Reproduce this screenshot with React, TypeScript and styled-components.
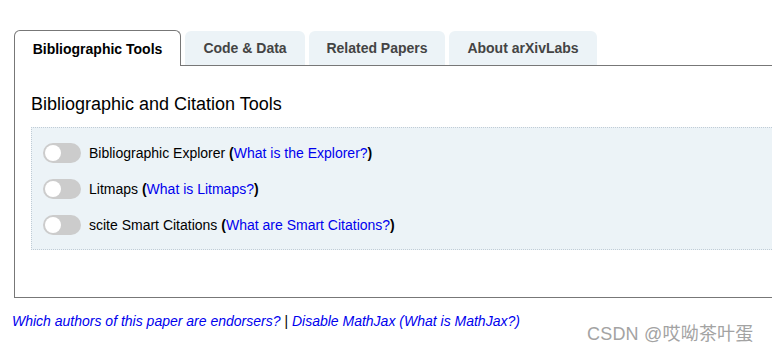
import React from 'react'
import styled, { createGlobalStyle } from 'styled-components'

const GlobalStyle = createGlobalStyle`
  html, body {
    margin: 0;
    padding: 0;
    background: #fff;
    overflow: hidden;
  }
  body {
    font-family: 'Liberation Sans', Arial, sans-serif;
    color: #000;
  }
`

const Page = styled.div`
  position: relative;
  width: 772px;
  height: 351px;
  padding: 30px 0 0 14px;
  box-sizing: border-box;
  overflow: hidden;
`

const TabBar = styled.div`
  display: flex;
  align-items: flex-end;
  gap: 4px;
  height: 35px;
`

const Tab = styled.div<{ $active?: boolean; $width: number }>`
  box-sizing: border-box;
  width: ${({ $width }) => $width}px;
  height: ${({ $active }) => ($active ? '36px' : '34px')};
  display: flex;
  align-items: center;
  justify-content: center;
  font-size: 14px;
  font-weight: bold;
  white-space: nowrap;
  color: ${({ $active }) => ($active ? '#000' : '#444')};
  background: ${({ $active }) => ($active ? '#fff' : '#ecf3f7')};
  border: ${({ $active }) => ($active ? '1px solid #777' : 'none')};
  border-bottom: none;
  border-radius: 6px 6px 0 0;
  margin-bottom: ${({ $active }) => ($active ? '-1px' : '0')};
  position: relative;
  z-index: ${({ $active }) => ($active ? 1 : 0)};
`

const TabBody = styled.div`
  box-sizing: border-box;
  width: 758px;
  height: 233px;
  border: 1px solid #777;
  border-right: none;
  padding: 27px 0 0 16px;
`

const Heading = styled.h2`
  margin: 0 0 12px;
  font-size: 18px;
  font-weight: normal;
  line-height: 22px;
  color: #000;
`

const ToolPanel = styled.div`
  box-sizing: border-box;
  height: 123px;
  background: #ecf3f7;
  border: 1px dotted #c0ccd6;
  border-right: none;
  padding: 15px 0 0 11px;
  display: flex;
  flex-direction: column;
  gap: 16px;
`

const ToolRow = styled.div`
  display: flex;
  align-items: center;
  gap: 8px;
  height: 20px;
  font-size: 14px;
`

const Switch = styled.span`
  position: relative;
  flex: none;
  width: 38px;
  height: 20px;
  border-radius: 10px;
  background: #ccc;

  &::before {
    content: '';
    position: absolute;
    left: 2px;
    top: 2px;
    width: 16px;
    height: 16px;
    border-radius: 50%;
    background: #fff;
  }
`

const Paren = styled.b`
  font-weight: bold;
`

const Link = styled.a`
  color: #0000ee;
  text-decoration: none;
`

const Footer = styled.div`
  margin: 15px 0 0 -2px;
  font-size: 14px;
  font-style: italic;
  color: #000;
`

const Watermark = styled.div`
  position: absolute;
  left: 587px;
  top: 319px;
  font-family: 'Liberation Sans', 'Noto Sans CJK SC', sans-serif;
  font-size: 18px;
  color: #a3a3a3;
  letter-spacing: 0.2px;
`

const tools = [
  { name: 'Bibliographic Explorer', help: 'What is the Explorer?' },
  { name: 'Litmaps', help: 'What is Litmaps?' },
  { name: 'scite Smart Citations', help: 'What are Smart Citations?' },
]

const tabs = [
  { label: 'Bibliographic Tools', width: 167 },
  { label: 'Code & Data', width: 120 },
  { label: 'Related Papers', width: 136 },
  { label: 'About arXivLabs', width: 148 },
]

export default function App() {
  return (
    <Page>
      <GlobalStyle />
      <TabBar>
        {tabs.map((t, i) => (
          <Tab key={t.label} $active={i === 0} $width={t.width}>
            {t.label}
          </Tab>
        ))}
      </TabBar>
      <TabBody>
        <Heading>Bibliographic and Citation Tools</Heading>
        <ToolPanel>
          {tools.map((tool) => (
            <ToolRow key={tool.name}>
              <Switch />
              <span>
                {tool.name} <Paren>(</Paren>
                <Link href="#">{tool.help}</Link>
                <Paren>)</Paren>
              </span>
            </ToolRow>
          ))}
        </ToolPanel>
      </TabBody>
      <Footer>
        <Link href="#">Which authors of this paper are endorsers?</Link> |{' '}
        <Link href="#">Disable MathJax</Link> <Link href="#">(What is MathJax?)</Link>
      </Footer>
      <Watermark>CSDN @哎呦茶叶蛋</Watermark>
    </Page>
  )
}
